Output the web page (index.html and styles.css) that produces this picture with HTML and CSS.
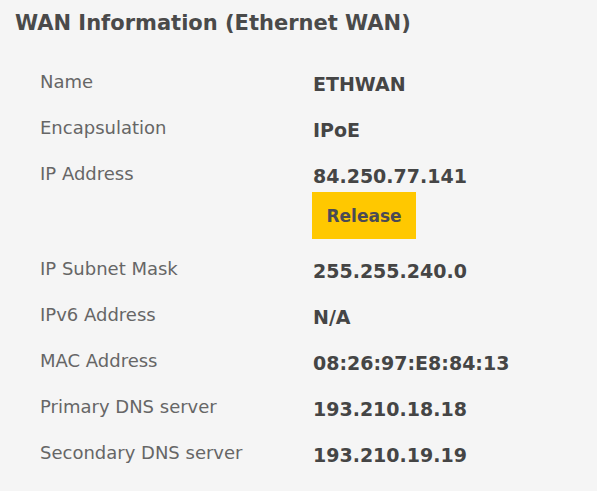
FILE: index.html
```html
<!DOCTYPE html>
<html lang="en">
<head>
<meta charset="utf-8">
<title>WAN Information</title>
<link rel="stylesheet" href="styles.css">
</head>
<body>
<main class="panel">
  <h1 class="title">WAN Information (Ethernet WAN)</h1>
  <div class="info">
    <div class="row"><div class="label">Name</div><div class="value">ETHWAN</div></div>
    <div class="row"><div class="label">Encapsulation</div><div class="value">IPoE</div></div>
    <div class="row row-action"><div class="label">IP Address</div><div class="value">84.250.77.141<button class="btn" type="button">Release</button></div></div>
    <div class="row"><div class="label">IP Subnet Mask</div><div class="value">255.255.240.0</div></div>
    <div class="row"><div class="label">IPv6 Address</div><div class="value">N/A</div></div>
    <div class="row"><div class="label">MAC Address</div><div class="value">08:26:97:E8:84:13</div></div>
    <div class="row"><div class="label">Primary DNS server</div><div class="value">193.210.18.18</div></div>
    <div class="row"><div class="label">Secondary DNS server</div><div class="value">193.210.19.19</div></div>
  </div>
</main>
</body>
</html>
```
FILE: styles.css
```css
html, body {
  margin: 0;
  padding: 0;
  background: #f5f5f5;
  height: 100%;
}
body {
  font-family: "DejaVu Sans", sans-serif;
}
.panel {
  padding: 9px 15px 0 15px;
}
.title {
  margin: 0;
  font-size: 21px;
  line-height: 28px;
  font-weight: bold;
  color: #4a4a4a;
}
.info {
  margin-top: 33px;
  padding-left: 25px;
}
.row {
  display: grid;
  grid-template-columns: 273px 1fr;
  padding-bottom: 20px;
}
.row-action {
  padding-bottom: 18px;
}
.label {
  font-size: 18px;
  line-height: 24px;
  color: #666666;
}
.value {
  padding-top: 2px;
  font-size: 19px;
  line-height: 24px;
  font-weight: bold;
  color: #454545;
  display: flex;
  flex-direction: column;
  align-items: flex-start;
}
.btn {
  margin-top: 4px;
  margin-left: -1px;
  width: 104px;
  height: 47px;
  border: none;
  border-radius: 0;
  background: #ffc800;
  font-family: "DejaVu Sans", sans-serif;
  font-size: 17px;
  font-weight: bold;
  color: #4a4a55;
  padding: 0;
}
```
